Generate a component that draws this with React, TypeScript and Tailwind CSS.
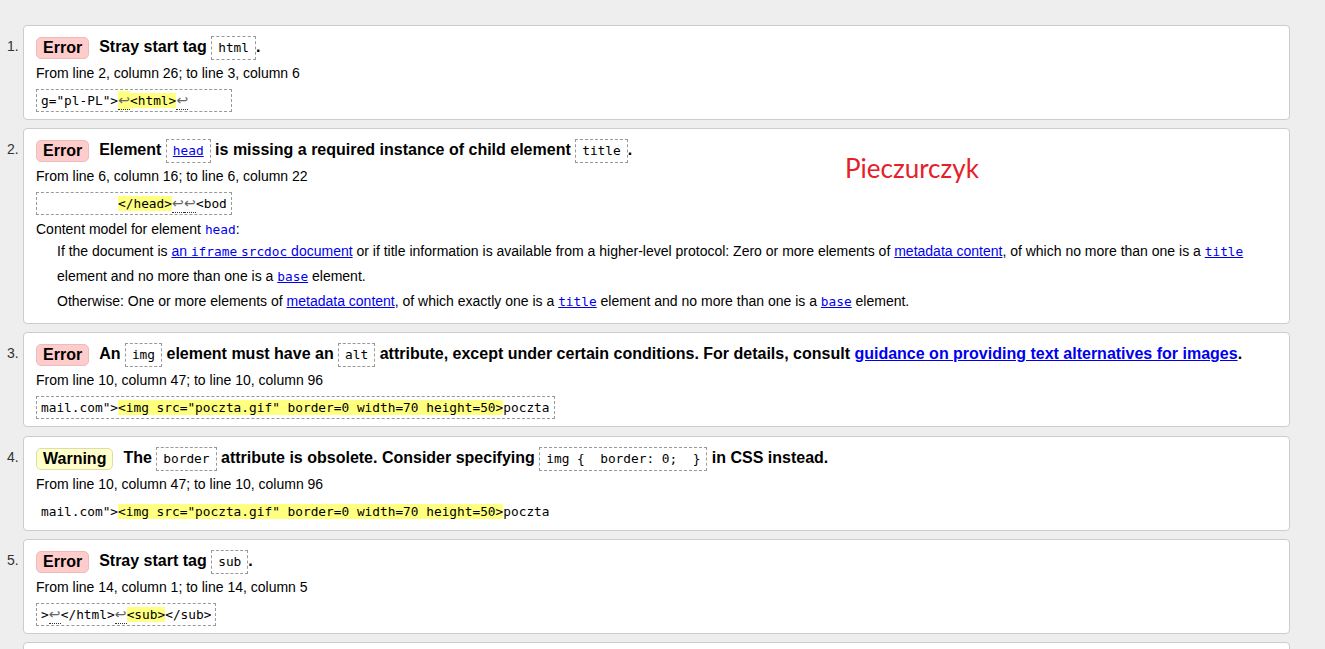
import React from 'react';

const SANS = "font-['Liberation_Sans',Arial,sans-serif]";
const MONO = "font-['DejaVu_Sans_Mono',monospace]";

function Badge({ kind }: { kind: 'Error' | 'Warning' }) {
  const cls =
    kind === 'Error'
      ? 'bg-[#ffcccc] border-[#eebbbb]'
      : 'bg-[#ffffcc] border-[#ddddaa]';
  return (
    <span
      className={`inline-block align-middle border rounded-[5px] px-[6px] h-[22px] leading-[20px] text-[16px] font-bold mr-[10px] ${cls}`}
    >
      {kind}
    </span>
  );
}

function Code({ children, link }: { children: React.ReactNode; link?: boolean }) {
  return (
    <code
      className={`inline-block align-middle border border-dashed border-[#999] px-[6px] h-[24px] leading-[22px] text-[12.8px] font-normal whitespace-pre ${MONO} ${
        link ? 'text-[#0000ee] underline' : 'text-black'
      }`}
    >
      {children}
    </code>
  );
}

function Ret({ hl }: { hl?: boolean }) {
  return (
    <span
      className={`inline-block w-[12px] h-[19px] leading-[19px] text-center text-[14px] font-['DejaVu_Sans',sans-serif] text-[#666] border-b border-dotted border-[#333] ${hl ? 'bg-[#ffff80]' : ''}`}
    >
      ↩
    </span>
  );
}

function Hl({ children }: { children: React.ReactNode }) {
  return <span className="bg-[#ffff80]">{children}</span>;
}

function Extract({ children, plain }: { children: React.ReactNode; plain?: boolean }) {
  return (
    <div className="mt-[5px] h-[23px]">
      <code
        className={`inline-block h-[23px] leading-[21px] px-[4px] text-[12.8px] whitespace-pre text-black ${MONO} ${
          plain ? 'border border-transparent' : 'border border-dashed border-[#999]'
        }`}
      >
        {children}
      </code>
    </div>
  );
}

function Loc({ children }: { children: React.ReactNode }) {
  return <div className="mt-[4px] h-[20px] leading-[20px] text-[14px]">{children}</div>;
}

function Item({
  n,
  children,
  pb = 'pb-[8px]',
  mb = 'mb-[8px]',
}: {
  n?: number;
  children: React.ReactNode;
  pb?: string;
  mb?: string;
}) {
  return (
    <li className={`flex ${mb}`}>
      <div className="w-[23px] shrink-0 pl-[7px] pt-[9px] h-[34px] leading-[25px] text-[14px] text-[#333]">
        {n ? `${n}.` : ''}
      </div>
      <div className={`relative flex-1 bg-white border border-[#cccccc] rounded-[4px] pt-[8px] px-[12px] ${pb}`}>
        {children}
      </div>
    </li>
  );
}

function A({ children, mono }: { children: React.ReactNode; mono?: boolean }) {
  return (
    <a className={`text-[#0000ee] underline ${mono ? `${MONO} text-[12.8px]` : ''}`}>{children}</a>
  );
}

export default function App() {
  return (
    <div className={`h-[649px] overflow-hidden bg-[#eeeeee] pt-[25px] pr-[35px] text-black ${SANS}`}>
      <ol>
        <Item n={1}>
          <div className="h-[25px] leading-[25px] text-[16px] font-bold whitespace-nowrap">
            <Badge kind="Error" />
            Stray start tag <Code>html</Code>.
          </div>
          <Loc>From line 2, column 26; to line 3, column 6</Loc>
          <Extract>
            g="pl-PL"&gt;<Ret hl />
            <Hl>&lt;html&gt;</Hl>
            <Ret />
            {'     '}
          </Extract>
        </Item>

        <Item n={2} pb="pb-[9px]">
          <div className="h-[25px] leading-[25px] text-[16px] font-bold whitespace-nowrap">
            <Badge kind="Error" />
            Element <Code link>head</Code> is missing a required instance of child element{' '}
            <Code>title</Code>.
          </div>
          <Loc>From line 6, column 16; to line 6, column 22</Loc>
          <Extract>
            {'          '}
            <Hl>&lt;/head&gt;</Hl>
            <Ret />
            <Ret />
            &lt;bod
          </Extract>
          <div className="mt-[5px] h-[20px] leading-[20px] text-[14px]">
            Content model for element <a className={`text-[#0000ee] text-[12.8px] ${MONO}`}>head</a>:
          </div>
          <div className="pl-[21px] pr-[20px] text-[14px] leading-[25px]">
            <p>
              If the document is{' '}
              <A>
                an <span className={`${MONO} text-[12.8px]`}>iframe</span>{' '}
                <span className={`${MONO} text-[12.8px]`}>srcdoc</span> document
              </A>{' '}
              or if title information is available from a higher-level protocol: Zero or more
              elements of <A>metadata content</A>, of which no more than one is a{' '}
              <A mono>title</A> element and no more than one is a <A mono>base</A> element.
            </p>
            <p>
              Otherwise: One or more elements of <A>metadata content</A>, of which exactly one is a{' '}
              <A mono>title</A> element and no more than one is a <A mono>base</A> element.
            </p>
          </div>
          <div className="absolute left-[821px] top-[21px] text-[26px] leading-[36px] text-[#e5202a] font-['Lato',sans-serif]">
            Pieczurczyk
          </div>
        </Item>

        <Item n={3} mb="mb-[9px]">
          <div className="h-[25px] leading-[25px] text-[16px] font-bold whitespace-nowrap">
            <Badge kind="Error" />
            An <Code>img</Code> element must have an <Code>alt</Code> attribute, except under certain
            conditions. For details, consult{' '}
            <a className="text-[#0000ee] underline">guidance on providing text alternatives for images</a>.
          </div>
          <Loc>From line 10, column 47; to line 10, column 96</Loc>
          <Extract>
            mail.com"&gt;<Hl>&lt;img src="poczta.gif" border=0 width=70 height=50&gt;</Hl>poczta
          </Extract>
        </Item>

        <Item n={4}>
          <div className="h-[25px] leading-[25px] text-[16px] font-bold whitespace-nowrap">
            <Badge kind="Warning" />
            The <Code>border</Code> attribute is obsolete. Consider specifying{' '}
            <Code>{'img {  border: 0;  }'}</Code> in CSS instead.
          </div>
          <Loc>From line 10, column 47; to line 10, column 96</Loc>
          <Extract plain>
            mail.com"&gt;<Hl>&lt;img src="poczta.gif" border=0 width=70 height=50&gt;</Hl>poczta
          </Extract>
        </Item>

        <Item n={5}>
          <div className="h-[25px] leading-[25px] text-[16px] font-bold whitespace-nowrap">
            <Badge kind="Error" />
            Stray start tag <Code>sub</Code>.
          </div>
          <Loc>From line 14, column 1; to line 14, column 5</Loc>
          <Extract>
            &gt;<Ret />
            &lt;/html&gt;
            <Ret />
            <Hl>&lt;sub&gt;</Hl>&lt;/sub&gt;
          </Extract>
        </Item>

        <Item>
          <div className="h-[80px]" />
        </Item>
      </ol>
    </div>
  );
}
